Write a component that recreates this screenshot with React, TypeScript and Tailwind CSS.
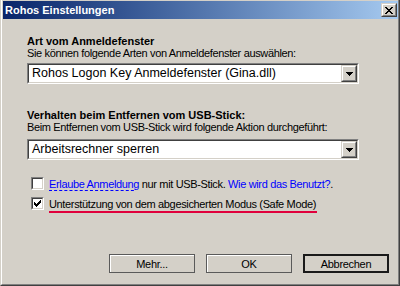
const FONT = { fontFamily: '"Liberation Sans", Arial, sans-serif' };

function Raised({ className = '', children }: { className?: string; children?: React.ReactNode }) {
  return (
    <div className={`border border-t-[#D4D0C8] border-l-[#D4D0C8] border-r-[#404040] border-b-[#404040] ${className}`}>
      <div className="h-full w-full border border-t-white border-l-white border-r-[#808080] border-b-[#808080] bg-[#D4D0C8] flex items-center justify-center">
        {children}
      </div>
    </div>
  );
}

function Combo({ value }: { value: string }) {
  return (
    <div className="w-[332px] h-[21px] border border-t-[#808080] border-l-[#808080] border-r-white border-b-white">
      <div className="h-full w-full border border-t-[#404040] border-l-[#404040] border-r-[#D4D0C8] border-b-[#D4D0C8] bg-white flex items-center">
        <span className="flex-1 pl-[3px] text-[12.5px] leading-[17px] text-black whitespace-nowrap">{value}</span>
        <Raised className="w-[16px] h-[17px]">
          <svg width="7" height="4" viewBox="0 0 7 4" className="mt-[1px]">
            <path d="M0 0h7v1H0zM1 1h5v1H1zM2 2h3v1H2zM3 3h1v1H3z" fill="#000" />
          </svg>
        </Raised>
      </div>
    </div>
  );
}

function Check({ checked }: { checked?: boolean }) {
  return (
    <div className="w-[13px] h-[13px] border border-t-[#808080] border-l-[#808080] border-r-white border-b-white shrink-0">
      <div className="h-full w-full border border-t-[#404040] border-l-[#404040] border-r-[#D4D0C8] border-b-[#D4D0C8] bg-white flex items-center justify-center">
        {checked && (
          <svg width="7" height="7" viewBox="0 0 7 7">
            <path d="M0 2h1v3H0zM1 3h1v3H1zM2 4h1v3H2zM3 3h1v3H3zM4 2h1v3H4zM5 1h1v3H5zM6 0h1v3H6z" fill="#000" />
          </svg>
        )}
      </div>
    </div>
  );
}

function Button({ label, isDefault }: { label: string; isDefault?: boolean }) {
  return (
    <div
      className={`w-[86px] h-[19px] flex items-center justify-center text-[11px] tracking-[-0.3px] text-black bg-[#D4D0C8] ${
        isDefault ? 'border-2 border-[#1a1a1a]' : 'border border-[#5a5a5a] shadow-[inset_1px_1px_0_#ffffff]'
      }`}
    >
      {label}
    </div>
  );
}

export default function App() {
  return (
    <div className="w-[400px] h-[286px] bg-[#D4D0C8] border-l border-l-[#D4D0C8] border-r border-r-[#404040] border-b border-b-[#404040]" style={FONT}>
      <div className="h-full w-full border-l border-l-white border-r border-r-[#808080] border-b border-b-[#808080] pl-[1px] pt-[1px] flex flex-col">
        {/* Title bar */}
        <div className="h-[18px] flex items-center justify-between bg-gradient-to-r from-[#0A246A] to-[#A6CAF0] pl-[2px] pr-[1px]">
          <span className="text-[11px] font-bold text-white leading-none">Rohos Einstellungen</span>
          <Raised className="w-[16px] h-[14px]">
            <svg width="8" height="7" viewBox="0 0 8 7">
              <path d="M0 0h2v1H0zM6 0h2v1H6zM1 1h2v1H1zM5 1h2v1H5zM2 2h4v1H2zM3 3h2v1H3zM2 4h4v1H2zM1 5h2v1H1zM5 5h2v1H5zM0 6h2v1H0zM6 6h2v1H6z" fill="#000" />
            </svg>
          </Raised>
        </div>

        <div className="flex-1 flex flex-col pl-[24px] text-[11px] leading-[12px] text-black">
          <div className="mt-[16px] font-bold">Art vom Anmeldefenster</div>
          <div className="tracking-[-0.35px]">Sie können folgende Arten von Anmeldefenster auswählen:</div>
          <div className="mt-[4px]">
            <Combo value="Rohos Logon Key Anmeldefenster (Gina.dll)" />
          </div>

          <div className="mt-[25px] font-bold">Verhalten beim Entfernen vom USB-Stick:</div>
          <div className="tracking-[-0.35px]">Beim Entfernen vom USB-Stick wird folgende Aktion durchgeführt:</div>
          <div className="mt-[6px]">
            <Combo value="Arbeitsrechner sperren" />
          </div>

          <div className="mt-[17px] ml-[4px] flex items-center gap-[5px] h-[13px] tracking-[-0.35px]">
            <Check />
            <span className="whitespace-nowrap">
              <span className="text-[#0000FF] underline decoration-dashed decoration-[#0000FF] underline-offset-2">Erlaube Anmeldung</span>
              {' '}nur mit USB-Stick.{' '}
              <span className="text-[#0000FF]">Wie wird das Benutzt?</span>.
            </span>
          </div>
          <div className="mt-[7px] ml-[4px] flex items-center gap-[5px] h-[13px] tracking-[-0.35px]">
            <Check checked />
            <span className="whitespace-nowrap border-b-2 border-[#E0003C] pb-[1px] pr-[1px] mt-[3px]">
              Unterstützung von dem abgesicherten Modus (Safe Mode)
            </span>
          </div>

          <div className="mt-auto mb-[11px] flex justify-end gap-[11px] pr-[9px]">
            <Button label="Mehr..." />
            <Button label="OK" />
            <Button label="Abbrechen" isDefault />
          </div>
        </div>
      </div>
    </div>
  );
}
